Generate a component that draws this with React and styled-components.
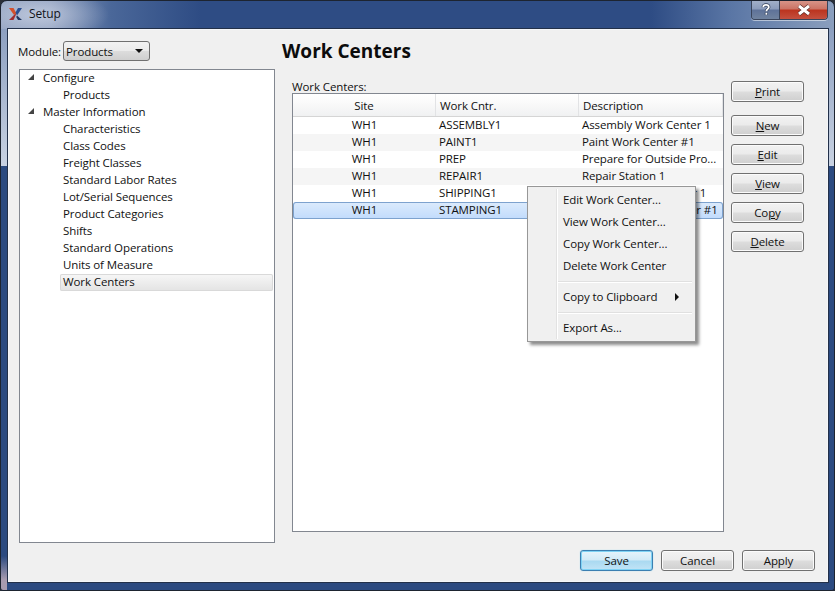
import React from 'react';
import styled, { createGlobalStyle } from 'styled-components';

const GlobalStyle = createGlobalStyle`
  html, body {
    margin: 0;
    padding: 0;
    background: #2b2f38;
  }
  body {
    font-family: "Open Sans", "Noto Sans", sans-serif;
    font-size: 11.5px;
    letter-spacing: -0.1px;
    color: #111;
  }
  u { text-underline-offset: 1px; }
`;

const Window = styled.div`
  position: relative;
  width: 835px;
  height: 591px;
  box-sizing: border-box;
  display: flex;
  flex-direction: column;
  border-radius: 7px 7px 3px 3px;
  border: 1px solid #1d2430;
  overflow: hidden;
  background-color: #2b4a80;
  background-image:
    radial-gradient(ellipse 70px 26px at 38px 14px, rgba(205,213,230,.75) 0, rgba(205,213,230,0) 100%),
    linear-gradient(90deg, #8e9fbe 0, #8b9cbc 50px, #4a6799 110px, #2e4c84 200px, #2e4c84 650px, #5a76a5 730px, #8b9fbe 834px),
    linear-gradient(180deg, #8c9fc0 0, #c8d2e2 100%),
    linear-gradient(180deg, rgba(168,156,176,0) 0, #a89cb0 70%);
  background-size: 100% 28px, 100% 28px, 100% 138px, 6px 34px;
  background-position: 0 0, 0 0, 0 27px, 0 100%;
  background-repeat: no-repeat;
`;
const TitleBar = styled.div`
  height: 27px;
  flex: none;
  display: flex;
  align-items: flex-start;
  padding-left: 8px;
  gap: 7px;
`;
const TitleLogo = styled.svg`
  width: 13px;
  height: 12px;
  margin-top: 7px;
`;
const TitleText = styled.span`
  margin-top: 5px;
  font-size: 12px;
  line-height: 16px;
  letter-spacing: -0.1px;
  color: #10131a;
`;
const WinControls = styled.div`
  margin-left: auto;
  margin-right: 6px;
  margin-top: -1px;
  display: flex;
  height: 19px;
  border: 1px solid #39445a;
  border-top: none;
  border-radius: 0 0 4px 4px;
  overflow: hidden;
  box-shadow: 0 1px 0 rgba(255,255,255,.5);
`;
const WinButton = styled.div`
  display: flex;
  align-items: center;
  justify-content: center;
  width: ${p => (p.$close ? '47px' : '27px')};
  border-left: ${p => (p.$close ? '1px solid #39445a' : 'none')};
  background: ${p => (p.$close
    ? 'linear-gradient(180deg, #d9988c 0, #cc7566 45%, #bc3520 55%, #c4503f 100%)'
    : 'linear-gradient(180deg, #a4b2ca 0, #8c9cbb 45%, #5f7399 55%, #70839f 100%)')};
`;
const Client = styled.div`
  flex: 1;
  margin: 0 5px 7px 6px;
  position: relative;
  border: 1px solid #223049;
  box-shadow: inset 0 0 0 1px #f4f6f9;
  background: #f0f0f0;
  box-sizing: border-box;
  padding: 12px 13px 11px 11px;
  display: grid;
  grid-template-columns: 256px 1fr;
  grid-template-rows: 1fr 21px;
  column-gap: 17px;
  row-gap: 7px;
`;
const LeftPane = styled.div`
  display: flex;
  flex-direction: column;
  gap: 8px;
  min-height: 0;
`;
const ModuleRow = styled.div`
  display: flex;
  align-items: center;
  height: 20px;
  margin-left: -1px;
`;
const ModuleLabel = styled.span`
  width: 45px;
`;
const Select = styled.div`
  width: 87px;
  height: 20px;
  box-sizing: border-box;
  border: 1px solid #707070;
  border-radius: 3px;
  padding: 0 6px 0 2px;
  display: flex;
  align-items: center;
  justify-content: space-between;
  background: linear-gradient(180deg, #f2f2f2 0, #ebebeb 48%, #dcdcdc 52%, #cfcfcf 100%);
`;
const Caret = styled.span`
  width: 0;
  height: 0;
  border-left: 4px solid transparent;
  border-right: 4px solid transparent;
  border-top: 4px solid #111;
`;
const Tree = styled.div`
  flex: 1;
  box-sizing: border-box;
  border: 1px solid #828790;
  background: #fff;
`;
const TreeRow = styled.div`
  height: 17px;
  box-sizing: border-box;
  display: flex;
  align-items: center;
  margin-left: ${p => (p.$child ? '40px' : '0')};
  margin-right: 1px;
  padding-left: ${p => (p.$child ? '3px' : '23px')};
  padding-bottom: 2px;
  position: relative;
  ${p => p.$selected && `
    box-shadow: inset 0 0 0 1px #d9d9d9;
    border-radius: 2px;
    background: linear-gradient(180deg, #f7f7f7 0, #e3e3e3 100%);
  `}
`;
const Expander = styled.span`
  position: absolute;
  left: 8px;
  top: 4px;
  width: 0;
  height: 0;
  border-left: 6px solid transparent;
  border-bottom: 6px solid #444;
`;
const RightPane = styled.div`
  display: grid;
  grid-template-columns: 432px 73px;
  column-gap: 7px;
  min-height: 0;
`;
const ListColumn = styled.div`
  display: flex;
  flex-direction: column;
  min-height: 0;
  padding-bottom: 11px;
`;
const Heading = styled.h1`
  margin: -2px 0 16px -10px;
  height: 25px;
  line-height: 25px;
  font-size: 19px;
  font-weight: 700;
  letter-spacing: 0;
  color: #0c0c0c;
`;
const ListLabel = styled.div`
  height: 13px;
  line-height: 13px;
`;
const Table = styled.div`
  flex: 1;
  box-sizing: border-box;
  border: 1px solid #828790;
  background: #fff;
`;
const HeaderRow = styled.div`
  display: grid;
  grid-template-columns: 143px 143px 1fr;
  height: 22px;
  border-bottom: 1px solid #d5d5d5;
  background: linear-gradient(180deg, #ffffff 0, #fafafa 40%, #f0f1f2 100%);
`;
const HeaderCell = styled.div`
  display: flex;
  align-items: center;
  padding-left: ${p => (p.$center ? '0' : '4px')};
  border-right: 1px solid #e2e3e5;
  justify-content: ${p => (p.$center ? 'center' : 'flex-start')};
`;
const Row = styled.div`
  display: grid;
  grid-template-columns: 143px 143px 1fr;
  height: 17px;
  line-height: 16px;
  box-sizing: border-box;
  background: ${p => (p.$alt ? '#f5f5f5' : '#fff')};
  ${p => p.$selected && `
    box-shadow: inset 0 0 0 1px #7da2ce;
    border-radius: 3px;
    background: linear-gradient(180deg, #dcebfc 0, #c1dbfc 100%);
  `}
`;
const Cell = styled.div`
  padding-left: ${p => (p.$center ? '0' : '3px')};
  white-space: nowrap;
  overflow: hidden;
  text-align: ${p => (p.$center ? 'center' : 'left')};
`;
const ButtonColumn = styled.div`
  display: flex;
  flex-direction: column;
  padding-top: 40px;
`;
const Button = styled.button`
  width: 73px;
  height: 21px;
  flex: none;
  box-sizing: border-box;
  margin: 0 0 8px;
  padding: 0;
  font: inherit;
  letter-spacing: inherit;
  line-height: 17px;
  color: #111;
  border: 1px solid #707070;
  border-radius: 3px;
  box-shadow: inset 0 0 0 1px #fbfbfb;
  background: linear-gradient(180deg, #f2f2f2 0, #ebebeb 48%, #dddddd 52%, #cfcfcf 100%);
  ${p => p.$gap && 'margin-bottom: 13px;'}
  ${p => p.$primary && `
    border-color: #3c7fb1;
    box-shadow: inset 0 0 0 1px #7fd2f4, 0 0 1px #7fd2f4;
    background: linear-gradient(180deg, #e6f4fb 0, #d2eaf7 48%, #a9d9f1 52%, #c2e4f6 100%);
  `}
`;
const Footer = styled.div`
  grid-column: 1 / -1;
  display: flex;
  justify-content: flex-end;
  gap: 8px;
`;
const FooterButton = styled(Button)`
  margin: 0;
`;
const Menu = styled.div`
  position: absolute;
  left: 519px;
  top: 157px;
  width: 169px;
  height: 156px;
  box-sizing: border-box;
  border: 1px solid #979797;
  background: #f0f0f0;
  box-shadow: 3px 3px 3px rgba(0,0,0,.45);
  padding: 2px 2px 2px 35px;
  z-index: 5;
  &::before {
    content: "";
    position: absolute;
    left: 28px;
    top: 2px;
    bottom: 2px;
    width: 1px;
    background: #e2e2e2;
    box-shadow: 1px 0 0 #fff;
  }
`;
const MenuItem = styled.div`
  height: 22px;
  line-height: 22px;
  display: flex;
  justify-content: space-between;
  align-items: center;
  padding-right: 14px;
`;
const MenuArrow = styled.span`
  width: 0;
  height: 0;
  border-top: 4px solid transparent;
  border-bottom: 4px solid transparent;
  border-left: 4px solid #111;
`;
const MenuSeparator = styled.div`
  height: 1px;
  margin: 4px 1px 4px -6px;
  background: #e0e0e0;
  box-shadow: 0 1px 0 #fff;
`;

const treeItems = [
  { label: 'Configure', parent: true },
  { label: 'Products' },
  { label: 'Master Information', parent: true },
  { label: 'Characteristics' },
  { label: 'Class Codes' },
  { label: 'Freight Classes' },
  { label: 'Standard Labor Rates' },
  { label: 'Lot/Serial Sequences' },
  { label: 'Product Categories' },
  { label: 'Shifts' },
  { label: 'Standard Operations' },
  { label: 'Units of Measure' },
  { label: 'Work Centers', selected: true },
];

const rows = [
  ['WH1', 'ASSEMBLY1', 'Assembly Work Center 1'],
  ['WH1', 'PAINT1', 'Paint Work Center #1'],
  ['WH1', 'PREP', 'Prepare for Outside Pro...'],
  ['WH1', 'REPAIR1', 'Repair Station 1'],
  ['WH1', 'SHIPPING1', 'Shipping Work Center 1'],
  ['WH1', 'STAMPING1', 'Stamping Work Center #1'],
];

export default function App() {
  return (
    <>
      <GlobalStyle />
      <Window>
        <TitleBar>
          <TitleLogo viewBox="0 0 13 12">
            <path d="M0 0h4.5l3 5.5L5 7z" fill="#d4502c" />
            <path d="M5 7l2.5-1.5L4.5 12H0z" fill="#a02c30" />
            <path d="M13 0H9L6.5 4.5 8 7.5z" fill="#2a4f92" />
            <path d="M13 12H9L7.2 9 8 7.5z" fill="#20355f" />
          </TitleLogo>
          <TitleText>Setup</TitleText>
          <WinControls>
            <WinButton>
              <svg width="10" height="13" viewBox="0 0 10 14">
                <path d="M2 4.5C2 3 3.2 2 5 2s3 1 3 2.5c0 2-2.6 2.2-2.6 4.3" fill="none" stroke="#2c3a55" strokeWidth="3.4" />
                <path d="M5.4 10.2v2.6" stroke="#2c3a55" strokeWidth="3.4" />
                <path d="M2 4.5C2 3 3.2 2 5 2s3 1 3 2.5c0 2-2.6 2.2-2.6 4.3" fill="none" stroke="#fff" strokeWidth="2" />
                <path d="M5.4 10.6v2" stroke="#fff" strokeWidth="2" />
              </svg>
            </WinButton>
            <WinButton $close>
              <svg width="16" height="12" viewBox="0 0 16 12">
                <path d="M3 2l10 8M13 2L3 10" stroke="#5a2a24" strokeWidth="4.4" />
                <path d="M3 2l10 8M13 2L3 10" stroke="#fff" strokeWidth="3" />
              </svg>
            </WinButton>
          </WinControls>
        </TitleBar>
        <Client>
          <LeftPane>
            <ModuleRow>
              <ModuleLabel>Module:</ModuleLabel>
              <Select>Products<Caret /></Select>
            </ModuleRow>
            <Tree>
              {treeItems.map(item => (
                <TreeRow key={item.label} $child={!item.parent} $selected={item.selected}>
                  {item.parent && <Expander />}
                  {item.label}
                </TreeRow>
              ))}
            </Tree>
          </LeftPane>
          <RightPane>
            <ListColumn>
              <Heading>Work Centers</Heading>
              <ListLabel>Work Centers:</ListLabel>
              <Table>
                <HeaderRow>
                  <HeaderCell $center>Site</HeaderCell>
                  <HeaderCell>Work Cntr.</HeaderCell>
                  <HeaderCell>Description</HeaderCell>
                </HeaderRow>
                {rows.map((r, i) => (
                  <Row key={r[1]} $alt={i % 2 === 1} $selected={i === 5}>
                    <Cell $center>{r[0]}</Cell>
                    <Cell>{r[1]}</Cell>
                    <Cell>{r[2]}</Cell>
                  </Row>
                ))}
              </Table>
            </ListColumn>
            <ButtonColumn>
              <Button $gap><u>P</u>rint</Button>
              <Button><u>N</u>ew</Button>
              <Button><u>E</u>dit</Button>
              <Button><u>V</u>iew</Button>
              <Button>Co<u>p</u>y</Button>
              <Button><u>D</u>elete</Button>
            </ButtonColumn>
          </RightPane>
          <Footer>
            <FooterButton $primary>Save</FooterButton>
            <FooterButton>Cancel</FooterButton>
            <FooterButton>Apply</FooterButton>
          </Footer>
          <Menu>
            <MenuItem>Edit Work Center...</MenuItem>
            <MenuItem>View Work Center...</MenuItem>
            <MenuItem>Copy Work Center...</MenuItem>
            <MenuItem>Delete Work Center</MenuItem>
            <MenuSeparator />
            <MenuItem>Copy to Clipboard<MenuArrow /></MenuItem>
            <MenuSeparator />
            <MenuItem>Export As...</MenuItem>
          </Menu>
        </Client>
      </Window>
    </>
  );
}
